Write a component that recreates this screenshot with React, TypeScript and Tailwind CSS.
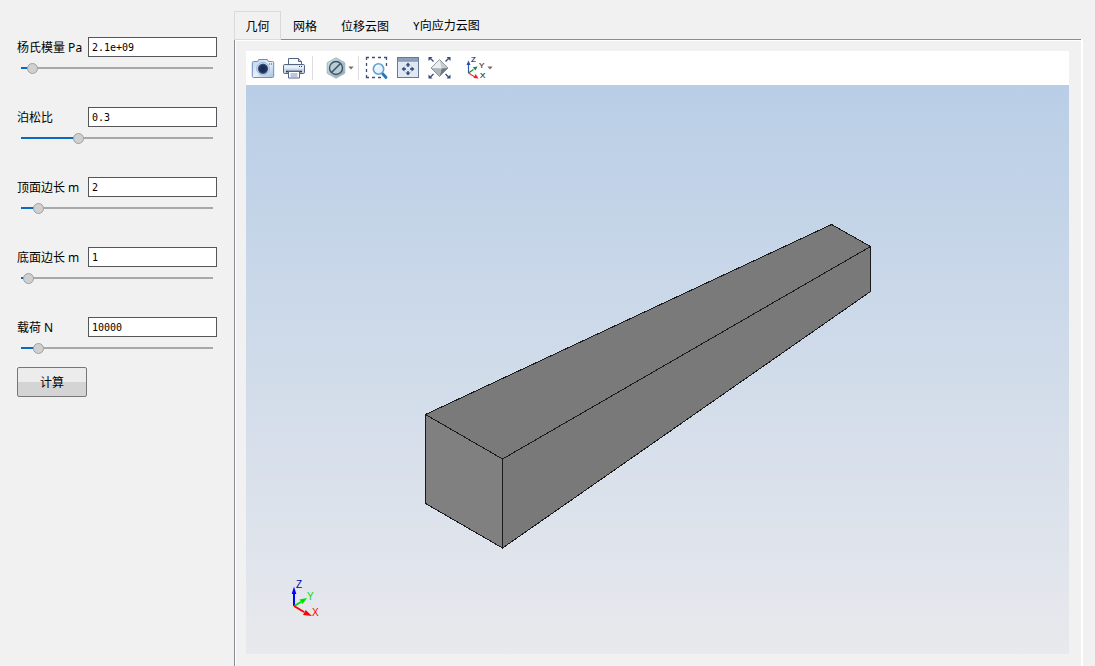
import React, { useState } from "react";

type Param = { id: string; label: string; value: string; position: number };

const PARAMS: Param[] = [
  { id: "young", label: "杨氏模量 Pa", value: "2.1e+09", position: 6 },
  { id: "poisson", label: "泊松比", value: "0.3", position: 52 },
  { id: "top", label: "顶面边长 m", value: "2", position: 12 },
  { id: "bottom", label: "底面边长 m", value: "1", position: 2 },
  { id: "load", label: "载荷 N", value: "10000", position: 12 },
];

const SLIDER_MAX = 181;

function ParamRow({ param }: { param: Param }) {
  const [value, setValue] = useState(param.value);
  const [pos, setPos] = useState(param.position);
  const fill = `${pos + 5}px`;
  return (
    <div>
      <div className="flex h-5 items-center">
        <label htmlFor={param.id} className="w-[71px] shrink-0 whitespace-nowrap pt-0.5 text-[12px] leading-5">
          {param.label}
        </label>
        <input
          id={param.id}
          type="text"
          value={value}
          onChange={(e) => setValue(e.target.value)}
          className="h-5 w-full min-w-0 border border-[#55565a] bg-white px-[3px] font-['DejaVu_Sans_Mono',monospace] text-[10px] outline-none"
        />
      </div>
      <div className="flex h-[22px] items-center px-1">
        <input
          type="range"
          aria-label={param.label}
          min={0}
          max={SLIDER_MAX}
          value={pos}
          onChange={(e) => setPos(Number(e.target.value))}
          style={{
            backgroundImage: `linear-gradient(to right, #0a6abf ${fill}, #a8a8a8 ${fill})`,
          }}
          className="h-[12px] w-full appearance-none bg-[length:100%_2px] bg-center bg-no-repeat [&::-webkit-slider-thumb]:size-[11px] [&::-webkit-slider-thumb]:appearance-none [&::-webkit-slider-thumb]:rounded-full [&::-webkit-slider-thumb]:border [&::-webkit-slider-thumb]:border-[#a0a0a0] [&::-webkit-slider-thumb]:bg-[#d0d0d0]"
        />
      </div>
    </div>
  );
}

function CameraIcon() {
  return (
    <svg width="24" height="24" viewBox="0 0 24 24">
      <defs>
        <linearGradient id="cam" x1="0" y1="0" x2="1" y2="1">
          <stop offset="0" stopColor="#b9d2ee" />
          <stop offset=".5" stopColor="#e9f1fa" />
          <stop offset="1" stopColor="#a4c0e1" />
        </linearGradient>
        <radialGradient id="lens">
          <stop offset="0" stopColor="#152849" />
          <stop offset=".7" stopColor="#1d355f" />
          <stop offset="1" stopColor="#496895" />
        </radialGradient>
      </defs>
      <path d="M2.5 5.5h4.2l1-2h8.6l1 2h4.2q1.2 0 1.2 1.2v13.6q0 1.200-1.200 1.200h-19q-1.200 0-1.200-1.200V6.700q0-1.200 1.200-1.200Z" fill="url(#cam)" stroke="#718fb8" />
      <circle cx="12" cy="12.7" r="6.4" fill="#d5e2f1" stroke="#9db5d6" />
      <circle cx="12" cy="12.7" r="5.2" fill="url(#lens)" />
      <path d="M18 8h1M20 8h1" stroke="#29446e" strokeWidth="1.2" />
    </svg>
  );
}

function PrinterIcon() {
  return (
    <svg width="24" height="24" viewBox="0 0 24 24" stroke="#536582">
      <path d="M5.5 9V2.5h10l3 3V9" fill="#f8fbff" />
      <path d="M15.5 2.5v3h3" fill="#bdcbdd" />
      <rect x=".5" y="8.5" width="21" height="9" rx="1.2" fill="#c9d6e7" />
      <path d="M1 9.5h20v3H1Z" fill="#eaf0f7" stroke="none" />
      <path d="M16 10.5h1M18 10.5h1" stroke="#253b60" />
      <path d="M3 15.5h16" stroke="#253b60" strokeWidth="1.6" />
      <path d="M5.5 15.5h11V22h-11Z" fill="#fff" />
      <path d="M7.5 18h7M7.5 20h7" stroke="#7b92b4" strokeWidth="1.2" />
    </svg>
  );
}

function HexIcon() {
  return (
    <svg width="24" height="24" viewBox="0 0 24 24">
      <defs>
        <linearGradient id="hex" x1="0" y1="0" x2="1" y2="1">
          <stop offset="0" stopColor="#d6e2e6" />
          <stop offset="1" stopColor="#8da9b1" />
        </linearGradient>
      </defs>
      <path d="m12 1.8 8.8 5v10.4l-8.8 5-8.8-5V6.8Z" fill="url(#hex)" stroke="#a2b7be" />
      <circle cx="12" cy="12" r="6.5" fill="#bccdd2" stroke="#37556f" strokeWidth="1.4" />
      <path d="m7.5 16.5 9-9" stroke="#37556f" strokeWidth="1.6" />
    </svg>
  );
}

function ZoomBoxIcon() {
  return (
    <svg width="24" height="24" viewBox="0 0 24 24" fill="none">
      <path d="M2.5 4V1.500H5M8 1.500h3M14 1.500h3M20 1.500h2.500V4M2.500 7v3M2.500 13v3M22.500 7v3M2.500 19v2.500H5M8 21.500h3M14 21.500h3" stroke="#3d4f78" strokeWidth="1.3" />
      <path d="m18.5 17.5 3.500 4" stroke="#1f78bd" strokeWidth="2.8" strokeLinecap="round" />
      <circle cx="14.5" cy="13" r="5.2" fill="#e7f3fc" stroke="#61a0d3" strokeWidth="1.6" />
      <path d="M11.5 12.5q.5-2.800 3.300-2.800" stroke="#fff" strokeWidth="1.2" />
    </svg>
  );
}

function FitIcon() {
  return (
    <svg width="24" height="24" viewBox="0 0 24 24">
      <rect x="1.5" y="1.5" width="21" height="20" fill="#dfe8f2" stroke="#657896" />
      <path d="M2 2h20v2.5H2Z" fill="#8ba0bf" />
      <path d="M2 5h20" stroke="#5d7295" />
      <path d="M12 9v2M12 15v2M8 13h2M14 13h2" stroke="#304875" strokeWidth="1.4" />
      <path d="m12 6.500 2.500 3h-5ZM12 19.500l2.500-3h-5ZM5.500 13l3-2.500v5ZM18.500 13l-3-2.500v5Z" fill="#334a75" />
    </svg>
  );
}

function RotateIcon() {
  return (
    <svg width="24" height="24" viewBox="0 0 24 24">
      <path d="m11.5 3.500 8.500 8.500-8.500 8.500L3 12Z" fill="#c8ccd1" />
      <path d="m11.5 3.500 2 9L3 12Z" fill="#eceff1" />
      <path d="m13.5 12.500-2 8L20 12Z" fill="#71787f" />
      <path d="m3 12 10.500.5-2 8Z" fill="#b0b6bb" />
      <path d="m11.5 3.500 8.500 8.500-8.500 8.500L3 12Z" fill="none" stroke="#7e858c" strokeWidth=".8" />
      <path d="m5.500 5.500-3-3M17.500 5.500l3-3M5.500 18l-3 3M17.500 18l3 3" stroke="#3b527d" strokeWidth="1.4" />
      <path d="M.5 1h4L.5 5ZM22.500 1h-4l4 4ZM.5 22.500h4l-4-4ZM22.500 22.500h-4l4-4Z" fill="#334a75" />
    </svg>
  );
}

function AxesIcon() {
  return (
    <svg width="24" height="24" viewBox="0 0 24 24" className="overflow-visible font-['Liberation_Sans',sans-serif] text-[8px]">
      <path d="M5.500 17V8" stroke="#3159a9" strokeWidth="1.2" />
      <path d="M5.500 4.500 7.500 9h-4Z" fill="#2451ab" />
      <path d="m5.500 17 5-3.500" stroke="#168b40" strokeWidth="1.2" />
      <path d="m14.500 10.500-2 4-2.800-3.200Z" fill="#168b40" />
      <path d="m5.500 17 6 3.700" stroke="#e33" strokeWidth="1.2" />
      <path d="m15.500 22.500-5-.5 2.200-4Z" fill="#ed2024" />
      <g fill="#333" stroke="#333" strokeWidth=".2">
        <text x="8" y="6">Z</text>
        <text x="16" y="12">Y</text>
        <text x="17" y="22">X</text>
      </g>
    </svg>
  );
}

function Tool({ name, children }: { name: string; children: React.ReactNode }) {
  return (
    <button type="button" aria-label={name} className="flex shrink-0 items-center">
      {children}
    </button>
  );
}

function Caret() {
  return (
    <svg width="6" height="4" viewBox="0 0 6 4">
      <path d="M.3.5h5.4L3 3.6Z" fill="#707070" />
    </svg>
  );
}

function Divider() {
  return <span className="h-6 w-px bg-[#dcdcdc]" />;
}

function Toolbar() {
  return (
    <div className="flex h-[34px] items-center bg-white pl-[5px]">
      <div className="flex gap-2">
        <Tool name="截图"><CameraIcon /></Tool>
        <Tool name="打印"><PrinterIcon /></Tool>
      </div>
      <div className="ml-[5px] flex items-center gap-[11px]">
        <Divider />
        <Tool name="显示"><HexIcon /><Caret /></Tool>
      </div>
      <div className="ml-1 flex items-center gap-[5px]">
        <Divider />
        <div className="flex gap-2">
          <Tool name="框选缩放"><ZoomBoxIcon /></Tool>
          <Tool name="适应窗口"><FitIcon /></Tool>
          <Tool name="旋转"><RotateIcon /></Tool>
        </div>
      </div>
      <div className="ml-[11px] flex">
        <Tool name="视角"><AxesIcon /><Caret /></Tool>
      </div>
    </div>
  );
}

function Scene() {
  return (
    <div className="min-h-0 flex-1 bg-linear-to-b from-[#b9cee6] to-[#e8e9ed]">
      <svg viewBox="0 0 823 569" className="block size-full font-['Liberation_Sans',sans-serif] text-[10px]" aria-label="几何模型">
        <g stroke="#1a1a1a" strokeWidth="1" strokeLinejoin="round" shapeRendering="crispEdges">
          <path d="M179.5 329.5 585.5 139.5 624.5 161.5 256.5 374Z" fill="#7a7a7a" />
          <path d="M256.5 374 624.5 161.5V206.5L256.5 463Z" fill="#797979" />
          <path d="M179.5 329.5 256.5 374V463L179.5 418.5Z" fill="#808080" />
        </g>
        <path d="M48 521V506" stroke="#00f" strokeWidth="2" />
        <path d="M48 501.5 50.3 509H45.7Z" fill="#00f" />
        <path d="m48 521 7-4" stroke="#00e000" strokeWidth="2" />
        <path d="m61 513-4.5 6-3-4.5Z" fill="#00e000" />
        <path d="m48 521 10 6" stroke="#f00" strokeWidth="2" />
        <path d="m66 531-9-1 2.6-5Z" fill="#f00" />
        <text x="50" y="503" fill="#0000b0">Z</text>
        <text x="61" y="515" fill="#00e000">Y</text>
        <text x="66" y="531" fill="#f00">X</text>
      </svg>
    </div>
  );
}

export default function App() {
  return (
    <div className="flex h-screen bg-[#f1f1f1] font-['Noto_Sans','Noto_Sans_CJK_SC',sans-serif] text-[12px] text-black">
      <aside className="w-[234px] shrink-0 px-[17px] pt-[37px]">
        <div className="flex flex-col gap-7">
          {PARAMS.map((p) => (
            <ParamRow key={p.id} param={p} />
          ))}
        </div>
        <button
          type="button"
          className="mt-2 h-[30px] w-[70px] rounded-[2px] border border-[#777] bg-linear-to-b from-[#ececec] from-50% to-[#d4d4d4] to-50% pt-0.5"
        >
          计算
        </button>
      </aside>

      <main className="mr-3 flex min-w-0 flex-1 flex-col pt-[11px]">
        <div role="tablist" className="flex h-7 shrink-0 font-['Noto_Sans_CJK_SC',sans-serif]">
          <button type="button" role="tab" aria-selected="true" className="z-10 -mb-px w-[47px] border border-[#dadada] bg-[#f1f1f1]">
            几何
          </button>
          <button type="button" role="tab" aria-selected="false" className="px-3 pt-0.5">网格</button>
          <button type="button" role="tab" aria-selected="false" className="px-3 pt-0.5">位移云图</button>
          <button type="button" role="tab" aria-selected="false" className="px-3 pt-0.5">
            <span className="font-['DejaVu_Sans_Mono',monospace] text-[11px]">Y</span>向应力云图
          </button>
        </div>
        <section className="flex min-h-0 flex-1 border-l border-[#8b8b96]">
          <div className="flex min-w-0 flex-1 flex-col border-t border-[#8b8b96]">
            <div className="flex min-h-0 flex-1 flex-col border-t border-l border-white pt-[10px] pr-3 pb-3 pl-[10px]">
              <Toolbar />
              <Scene />
            </div>
          </div>
          <div className="w-0.5 bg-white" />
        </section>
      </main>
    </div>
  );
}
